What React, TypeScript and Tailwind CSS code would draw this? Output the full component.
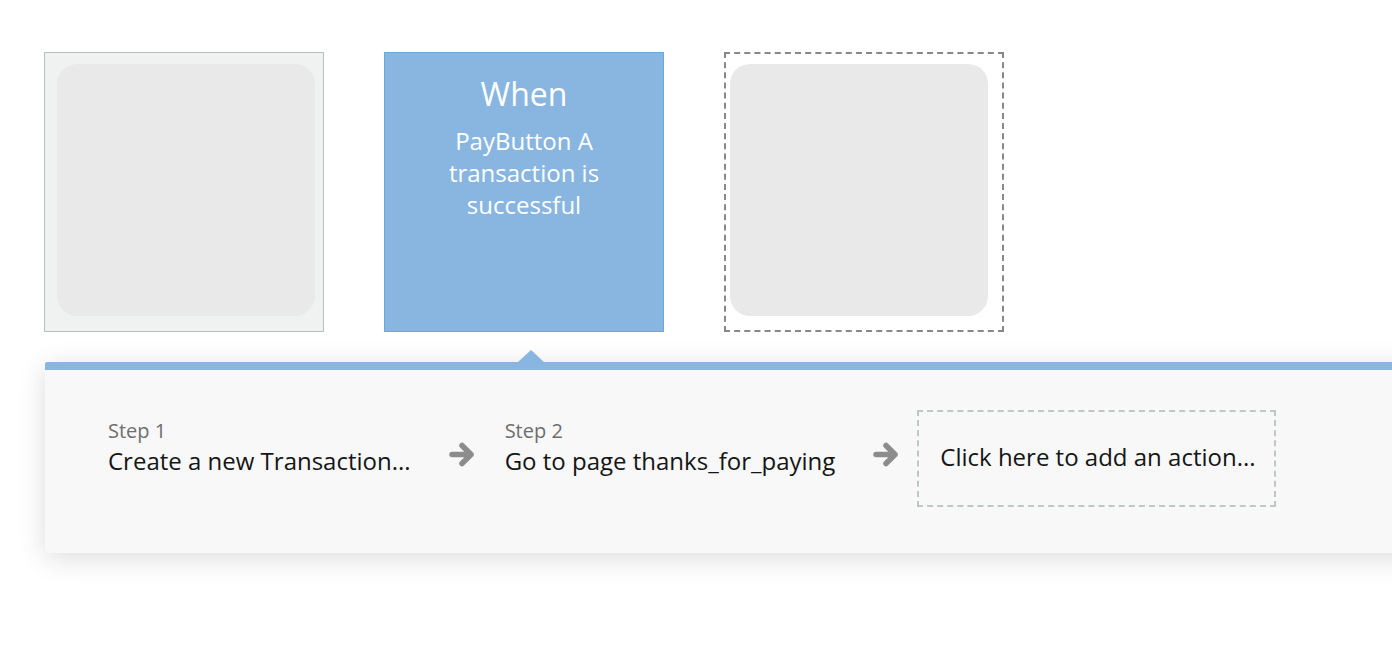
import React from 'react';

const Arrow: React.FC = () => (
    <svg width="26" height="27" viewBox="0 0 26 27" className="shrink-0">
        <path d="M3 13.5 H22 M13 4.5 L22 13.5 L13 22.5" fill="none" stroke="#8c8c8c" strokeWidth="5.5" strokeLinecap="round" strokeLinejoin="round" />
    </svg>
);

const Step: React.FC<{ n: number; text: string }> = ({ n, text }) => (
    <div className="flex flex-col mt-[7px]">
        <span className="text-[20px] leading-[28px] text-[#6e6e6e]">Step {n}</span>
        <span className="text-[24px] leading-[32px] text-[#151515] whitespace-nowrap">{text}</span>
    </div>
);

export default function App() {
    return (
        <div className="w-[1392px] h-[652px] bg-white overflow-hidden font-['Open_Sans',sans-serif]">
            {/* event boxes */}
            <div className="flex gap-[60px] pt-[52px] pl-[44px]">
                <div className="w-[280px] h-[280px] border border-[#b5bfc2] bg-[#f0f2f1] pt-[11px] pl-[12px]">
                    <div className="w-[258px] h-[252px] rounded-[20px] bg-[#e9e9e9]" />
                </div>
                <div className="w-[280px] h-[280px] border border-[#6aa8d8] bg-[#88b6e0] flex flex-col items-center pt-[21px] text-white">
                    <span className="text-[32px] leading-[40px]">When</span>
                    <span className="mt-[11px] text-[24px] leading-[32px] text-center w-[200px]">PayButton A transaction is successful</span>
                </div>
                <div className="w-[280px] h-[280px] border-2 border-dashed border-[#888888] bg-white pt-[10px] pl-[4px]">
                    <div className="w-[258px] h-[252px] rounded-[20px] bg-[#e9e9e9]" />
                </div>
            </div>

            {/* workflow panel */}
            <div className="relative mt-[30px] ml-[45px] w-[1400px]">
                <div className="absolute left-[473px] -top-[12px] w-0 h-0 border-l-[13px] border-r-[13px] border-b-[12px] border-l-transparent border-r-transparent border-b-[#88b6e0]" />
                <div className="border-t-[8px] border-[#88b6e0] bg-[#f8f8f8] h-[191px] rounded-tl-[2px] rounded-bl-[3px] shadow-[0_5px_28px_rgba(0,0,0,0.14)]">
                    <div className="flex items-start pt-[40px] pl-[63px]">
                        <Step n={1} text="Create a new Transaction..." />
                        <div className="ml-[38px] mt-[31px]"><Arrow /></div>
                        <div className="ml-[30px]"><Step n={2} text="Go to page thanks_for_paying" /></div>
                        <div className="ml-[38px] mt-[31px]"><Arrow /></div>
                        <div className="ml-[18px] w-[359px] h-[97px] border-2 border-dashed border-[#c0c7c9] flex items-center pl-[21px] pb-[4px]">
                            <span className="text-[24px] leading-[32px] text-[#151515] whitespace-nowrap">Click here to add an action...</span>
                        </div>
                    </div>
                </div>
            </div>
        </div>
    );
}
